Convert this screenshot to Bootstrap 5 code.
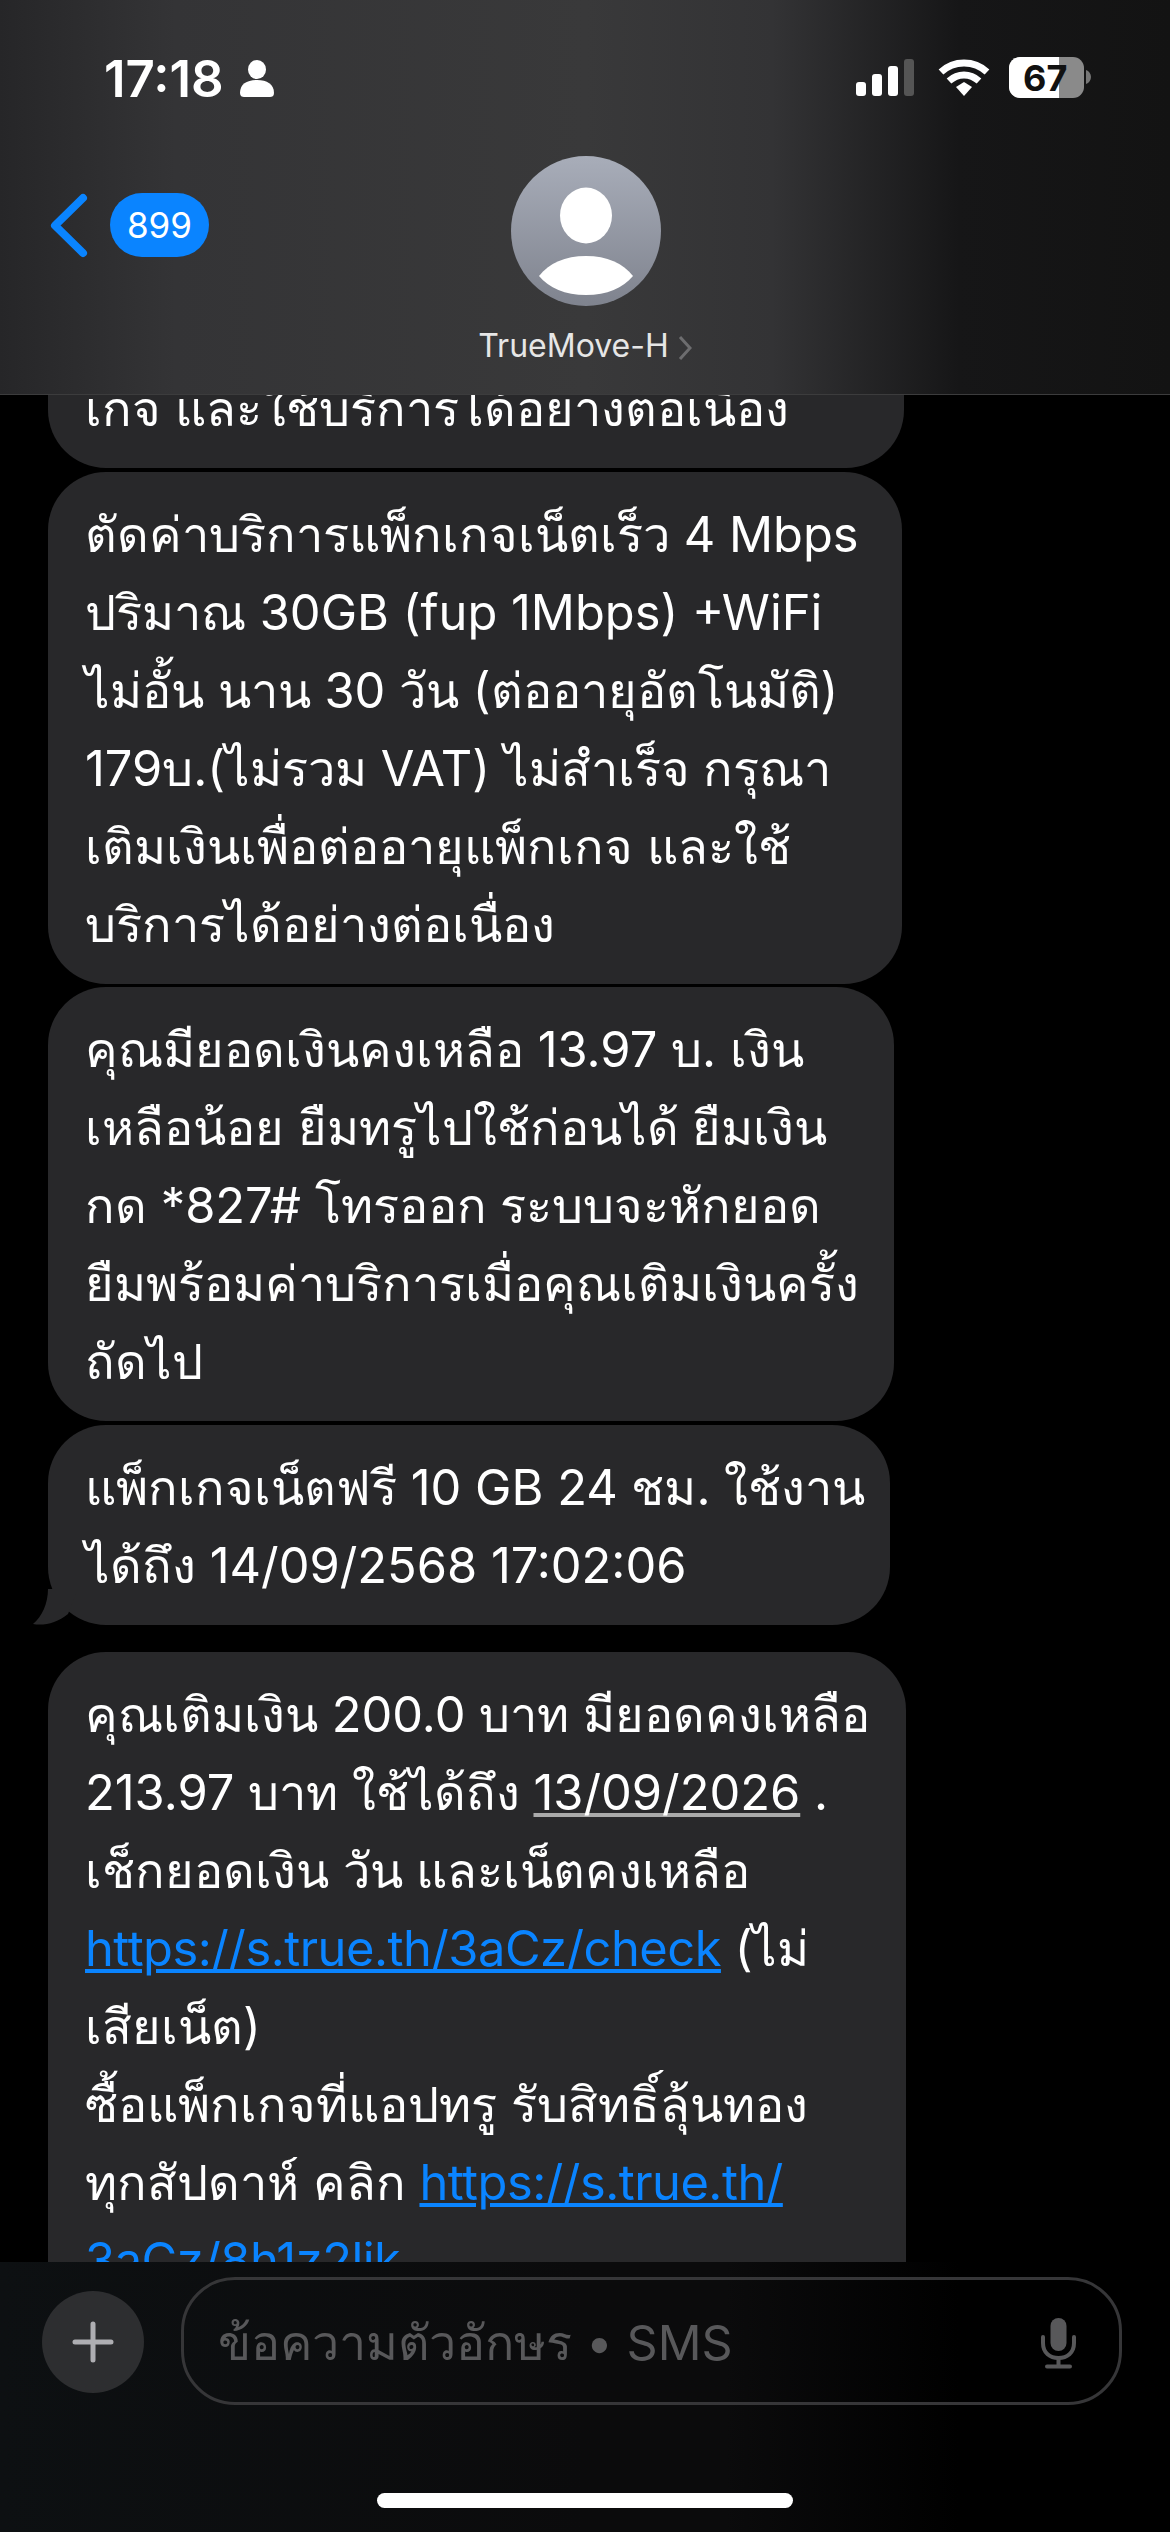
<!DOCTYPE html>
<html lang="th"><head><meta charset="utf-8"><title>Messages</title>
<link href="https://cdn.jsdelivr.net/npm/bootstrap@5.3.0/dist/css/bootstrap.min.css" rel="stylesheet">
<style>
html,body{margin:0;background:#000}
.phone{width:1170px;height:2532px;background:#000;color:#fff;font-family:Inter,"Liberation Sans","Noto Sans",sans-serif;overflow:hidden}
.top-bar{height:395px;flex:none;background:linear-gradient(90deg,#262628 0%,#343436 15%,#39393a 50%,#333335 66%,#161617 82%,#131313 100%);border-bottom:1px solid #3c3c3d}
.status-row{height:150px;padding:50px 75px 0 104px}
.clock{font-size:51px;font-weight:600;line-height:58px}
.nav-row{padding:0 0 0 48px;position:relative;height:244px}
.back-pill{background:#0a84ff;border-radius:32px;width:99px;height:64px;font-size:35px;line-height:64px;text-align:center;margin-left:22px;margin-top:43px}
.avatar{position:absolute;left:511px;top:6px;width:150px;height:150px}
.contact{position:absolute;left:0;right:0;top:176px;text-align:center;font-size:32px;line-height:40px;color:#e6e6e6}
.thread{flex:1 1 auto;overflow:hidden;min-height:0}
.msgs{margin-top:-127px;padding-left:48px;gap:3.5px;align-items:flex-start}
.bub{background:#28282a;border-radius:58px;padding:24px 0 20px 37px;font-size:48.8px;line-height:78px;white-space:nowrap;position:relative}
.bw-a{width:856px}.bw-b{width:854px}.bw-c{width:846px}.bw-d{width:842px}.bw-e{width:858px}
.tail{position:absolute;left:-16px;bottom:0;width:50px;height:40px}
.gap-after{margin-bottom:24px}
.bub a{color:#0a84ff;text-decoration:underline;letter-spacing:-.5px}
.dotted{text-decoration:underline;text-decoration-color:#aaa}
.bottom-bar{height:270px;flex:none;background:linear-gradient(90deg,#0d1012 0%,#0b0b0c 50%,#0b0b0c 62%,#000 82%);position:relative;padding:15px 0 0 42px}
.plus{width:102px;height:102px;border-radius:50%;background:#2d2e30;margin-top:14px;flex:none}
.field{width:941px;height:128px;margin-left:37px;border:3px solid #363638;border-radius:54px;padding:5px 43px 0 34px;font-size:48.5px;color:#58585a}
.home-bar{position:absolute;left:377px;width:416px;top:231px;height:15px;border-radius:8px;background:#fff}
</style></head><body>
<div class="phone d-flex flex-column">
<header class="top-bar">
 <div class="status-row d-flex justify-content-between align-items-start">
  <div class="d-flex align-items-center gap-3"><span class="clock">17:18</span>
   <svg width="34" height="38" viewBox="0 0 34 38"><ellipse cx="17" cy="9.500" rx="9" ry="9.500" fill="#fff"/><path d="M0 33c0-9 7-13 17-13s17 4 17 13c0 3-2 4-4 4H4c-2 0-4-1-4-4z" fill="#fff"/></svg></div>
  <svg width="245" height="52" viewBox="0 0 245 52">
   <rect x="6" y="32" width="10" height="14" rx="3" fill="#fff"/><rect x="22" y="24" width="10" height="22" rx="3" fill="#fff"/><rect x="38" y="16" width="10" height="30" rx="3" fill="#fff"/><rect x="54" y="9" width="10" height="37" rx="3" fill="#555"/>
   <path d="M91 22c13-12 33-12 46 0" fill="none" stroke="#fff" stroke-width="7"/><path d="M99 31c9-8 21-8 30 0" fill="none" stroke="#fff" stroke-width="7"/><path d="M106 37l8-5 8 5-8 9z" fill="#fff"/>
   <rect x="159" y="7" width="75" height="41" rx="11" fill="#8a8a8a"/><path d="M170 7h39v41h-39a11 11 0 0 1-11-11v-19a11 11 0 0 1 11-11z" fill="#fff"/>
   <path d="M236 20c3 1 5 4 5 7s-2 6-5 7z" fill="#777"/>
   <text x="173" y="41" font-family="Inter" font-size="36" font-weight="700" fill="#111">67</text>
  </svg>
 </div>
 <div class="nav-row d-flex align-items-start">
  <svg class="flex-none" width="40" height="72" viewBox="0 0 40 72" style="margin-top:40px"><path d="M35 8L7 35.500 35 63" fill="none" stroke="#0a84ff" stroke-width="8" stroke-linecap="round" stroke-linejoin="round"/></svg>
  <div class="back-pill">899</div>
  <svg class="avatar" viewBox="0 0 150 150"><defs><linearGradient id="av" x1="0" y1="0" x2="0" y2="1"><stop offset="0" stop-color="#a8adb9"/><stop offset="1" stop-color="#7f838e"/></linearGradient></defs><circle cx="75" cy="75" r="75" fill="url(#av)"/><ellipse cx="75" cy="59.500" rx="26" ry="28" fill="#fff"/><path d="M28 120c10-13 26-20 47-20s37 7 47 20c-10 12-26 19-47 19s-37-7-47-19z" fill="#fff"/></svg>
  <div class="contact">TrueMove-H <svg width="14" height="26" viewBox="0 0 14 26"><path d="M2 2l10 11L2 24" fill="none" stroke="#6d6d6f" stroke-width="3"/></svg></div>
 </div>
</header>
<main class="thread">
 <div class="msgs d-flex flex-column">
  <div class="bub bw-a">เงินเพื่อต่ออายุแพ็ก<br>เกจ และใช้บริการได้อย่างต่อเนื่อง</div>
  <div class="bub bw-b">ตัดค่าบริการแพ็กเกจเน็ตเร็ว 4 Mbps<br>ปริมาณ 30GB (fup 1Mbps) +WiFi<br>ไม่อั้น นาน 30 วัน (ต่ออายุอัตโนมัติ)<br>179บ.(ไม่รวม VAT) ไม่สำเร็จ กรุณา<br>เติมเงินเพื่อต่ออายุแพ็กเกจ และใช้<br>บริการได้อย่างต่อเนื่อง</div>
  <div class="bub bw-c">คุณมียอดเงินคงเหลือ 13.97 บ. เงิน<br>เหลือน้อย ยืมทรูไปใช้ก่อนได้ ยืมเงิน<br>กด *827# โทรออก ระบบจะหักยอด<br>ยืมพร้อมค่าบริการเมื่อคุณเติมเงินครั้ง<br>ถัดไป</div>
  <div class="bub bw-d gap-after">แพ็กเกจเน็ตฟรี 10 GB 24 ชม. ใช้งาน<br>ได้ถึง 14/09/2568 17:02:06<svg class="tail" viewBox="0 0 50 40"><path d="M16 4C16 18 10 32 1 39c11 2 24-1 35-10L46 4z" fill="#28282a"/></svg></div>
  <div class="bub bw-e">คุณเติมเงิน 200.0 บาท มียอดคงเหลือ<br>213.97 บาท ใช้ได้ถึง <span class="dotted">13/09/2026</span> .<br>เช็กยอดเงิน วัน และเน็ตคงเหลือ<br><a href="#">https://s.true.th/3aCz/check</a> (ไม่<br>เสียเน็ต)<br>ซื้อแพ็กเกจที่แอปทรู รับสิทธิ์ลุ้นทอง<br>ทุกสัปดาห์ คลิก <a href="#">https://s.true.th/</a><br><a href="#">3aCz/8h1z2lik</a></div>
 </div>
</main>
<footer class="bottom-bar d-flex align-items-start">
 <div class="plus d-flex align-items-center justify-content-center"><svg width="42" height="42" viewBox="0 0 42 42"><path d="M21 3v36M3 21h36" stroke="#aeaeb2" stroke-width="5" stroke-linecap="round"/></svg></div>
 <div class="field d-flex align-items-center justify-content-between"><span>ข้อความตัวอักษร • SMS</span>
  <svg width="35" height="52" viewBox="0 0 35 52"><rect x="9.500" y="0" width="16" height="33" rx="8" fill="#58585a"/><path d="M2 19v6c0 10 7 15 15.500 15S33 35 33 25v-6" fill="none" stroke="#58585a" stroke-width="4" stroke-linecap="round"/><path d="M17.500 40v8M6 48.500h23" stroke="#58585a" stroke-width="4" stroke-linecap="round"/></svg></div>
 <div class="home-bar"></div>
</footer>
</div>
<script src="https://cdn.jsdelivr.net/npm/bootstrap@5.3.0/dist/js/bootstrap.bundle.min.js"></script>
</body></html>
